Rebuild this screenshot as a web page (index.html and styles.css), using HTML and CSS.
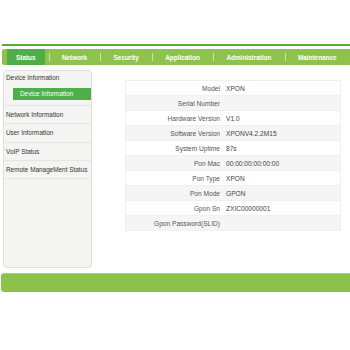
FILE: index.html
```html
<!DOCTYPE html>
<html lang="en">
  <head>
    <meta charset="UTF-8" />
    <title>Status - Device Information</title>
    <link rel="stylesheet" href="styles.css">
  </head>
  <body>
    <div class="page">
      <div class="topline"></div>

      <ul class="menu">
        <li class="active"><a href="#">Status</a></li>
        <li class="sep"></li>
        <li><a href="#">Network</a></li>
        <li class="sep"></li>
        <li><a href="#">Security</a></li>
        <li class="sep"></li>
        <li><a href="#">Application</a></li>
        <li class="sep"></li>
        <li><a href="#">Administration</a></li>
        <li class="sep"></li>
        <li><a href="#">Maintenance</a></li>
        <li class="sep"></li>
      </ul>

      <div class="content">
        <div class="sidebar">
          <div class="side-group">
            <div class="side-title">Device Information</div>
            <div class="side-sub">Device Information</div>
          </div>
          <div class="side-item">Network Information</div>
          <div class="side-item">User Information</div>
          <div class="side-item">VoIP Status</div>
          <div class="side-item">Remote ManageMent Status</div>
        </div>

        <div class="main">
          <table class="info">
            <tr><td class="label">Model</td><td>XPON</td></tr>
            <tr><td class="label">Serial Number</td><td></td></tr>
            <tr><td class="label">Hardware Version</td><td>V1.0</td></tr>
            <tr><td class="label">Software Version</td><td>XPONV4.2.2M15</td></tr>
            <tr><td class="label">System Uptime</td><td>87s</td></tr>
            <tr><td class="label">Pon Mac</td><td>00:00:00:00:00:00</td></tr>
            <tr><td class="label">Pon Type</td><td>XPON</td></tr>
            <tr><td class="label">Pon Mode</td><td>GPON</td></tr>
            <tr><td class="label">Gpon Sn</td><td>ZXIC00000001</td></tr>
            <tr><td class="label">Gpon Password(SLID)</td><td></td></tr>
          </table>
        </div>
      </div>

      <div class="footer"></div>
    </div>
  </body>
</html>
```

FILE: styles.css
```css
html,
body {
  margin: 0;
  padding: 0;
  overflow: hidden;
}

body {
  font-family: "Liberation Sans", Arial, sans-serif;
  background: #fff;
  color: #333;
}

.page {
  padding: 44px 0 0 2px;
}

.topline {
  height: 2px;
  background: #4db232;
}

/* top menu */
.menu {
  display: flex;
  align-items: center;
  height: 16px;
  margin: 3px 0 0;
  padding: 0 0 0 1px;
  list-style: none;
  background: #8cc24d;
  border-radius: 2px 0 0 2px;
}

.menu li {
  display: flex;
  align-items: center;
  height: 100%;
  padding: 0 4px;
}

.menu a {
  display: flex;
  align-items: center;
  height: 100%;
  padding: 0 9px;
  color: #fff;
  font-size: 6.4px;
  font-weight: bold;
  text-decoration: none;
}

.menu .active a {
  background: #4fae4a;
}

.menu .sep {
  width: 1px;
  height: 8px;
  padding: 0;
  background: rgba(255, 255, 255, 0.55);
}

.content {
  display: flex;
  align-items: flex-start;
  margin-top: 5px;
  padding-left: 1px;
}

/* left menu */
.sidebar {
  box-sizing: border-box;
  width: 89px;
  height: 198px;
  background: #f4f5f2;
  border: 1px solid #dfe0dc;
  border-radius: 4px;
  font-size: 6.4px;
  color: #333;
}

.side-group {
  padding-bottom: 5px;
  border-bottom: 1px solid #e6e7e4;
}

.side-title {
  height: 14px;
  line-height: 14px;
  padding-left: 2px;
}

.side-sub {
  height: 12px;
  line-height: 12px;
  margin: 3px 0 0 9px;
  padding-left: 7px;
  background: #4caf4a;
  color: #fff;
}

.side-item {
  height: 17.3px;
  line-height: 17.3px;
  padding-left: 2px;
  border-bottom: 1px solid #e6e7e4;
  white-space: nowrap;
}

/* info table */
.main {
  margin: 10px 0 0 33px;
}

.info {
  width: 216px;
  border-collapse: collapse;
  border: 1px solid #efefef;
  font-size: 6.6px;
}

.info tr:nth-child(even) {
  background: #f5f5f5;
}

.info td {
  height: 14px;
  padding: 0 0 0 3px;
  color: #444;
  border-bottom: 1px solid #f0f0f0;
}

.info td.label {
  width: 94px;
  padding: 0 3px 0 0;
  text-align: right;
  color: #555;
}

.footer {
  height: 19px;
  margin: 5px 0 0 -1px;
  background: #8bc34a;
  border-top: 1px solid #a6d46f;
  box-sizing: border-box;
  border-radius: 3px 0 0 3px;
}
```
